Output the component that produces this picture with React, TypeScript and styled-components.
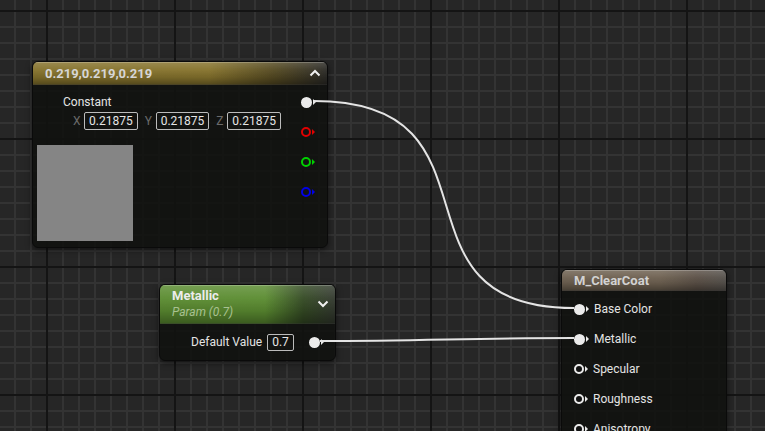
import React from "react";
import styled, { createGlobalStyle } from "styled-components";

const GlobalStyle = createGlobalStyle`
  html, body {
    margin: 0;
    padding: 0;
    background: #262626;
    overflow: hidden;
  }
  body {
    font-family: Roboto, "Liberation Sans", Arial, sans-serif;
    font-size: 12px;
  }
`;

const Canvas = styled.div`
  position: relative;
  width: 765px;
  height: 431px;
  overflow: hidden;
  background-color: #262626;
  background-image: linear-gradient(to right, #141414 2px, transparent 2px),
    linear-gradient(to bottom, #141414 2px, transparent 2px),
    linear-gradient(to right, #333333 2px, transparent 2px),
    linear-gradient(to bottom, #333333 2px, transparent 2px);
  background-size: 128px 128px, 128px 128px, 16px 16px, 16px 16px;
  background-position: 46px 10px;
`;

const Node = styled.div<{ $x: number; $y: number; $w: number; $h: number }>`
  position: absolute;
  left: ${(p) => p.$x}px;
  top: ${(p) => p.$y}px;
  width: ${(p) => p.$w}px;
  height: ${(p) => p.$h}px;
  box-sizing: border-box;
  display: flex;
  flex-direction: column;
  background: rgba(17, 18, 16, 0.9);
  border: 1px solid #0a0a0a;
  border-radius: 6px;
  box-shadow: 0 2px 6px rgba(0, 0, 0, 0.55);
  overflow: hidden;
  color: #e2e2e2;
`;

const Header = styled.div<{ $h: number; $tint: string; $mid: string; $end: string }>`
  position: relative;
  flex: none;
  height: ${(p) => p.$h}px;
  box-sizing: border-box;
  padding-left: 12px;
  display: flex;
  flex-direction: column;
  justify-content: center;
  background: linear-gradient(
      to bottom,
      rgba(255, 255, 255, 0.16) 0,
      rgba(255, 255, 255, 0.04) 35%,
      rgba(0, 0, 0, 0.12) 70%,
      rgba(0, 0, 0, 0.35) 100%
    ),
    linear-gradient(
      to right,
      ${(p) => p.$tint} 0%,
      ${(p) => p.$tint} 60%,
      ${(p) => p.$mid} 82%,
      ${(p) => p.$end} 100%
    );
  box-shadow: inset 0 1px 0 rgba(255, 255, 255, 0.22);
  border-bottom: 1px solid rgba(0, 0, 0, 0.5);
`;

const Title = styled.div<{ $color?: string }>`
  font-size: 13px;
  font-weight: 700;
  line-height: 17px;
  color: ${(p) => p.$color || "#d6d6d6"};
  white-space: nowrap;
`;

const SubTitle = styled.div`
  font-size: 12px;
  font-style: italic;
  line-height: 17px;
  color: #a8c191;
`;

const Chevron = styled.svg<{ $right: number }>`
  position: absolute;
  right: ${(p) => p.$right}px;
  top: 50%;
  transform: translateY(-50%);
`;

const Body = styled.div`
  flex: 1;
  display: flex;
`;

const LeftCol = styled.div`
  flex: 1;
  display: flex;
  flex-direction: column;
  padding-top: 9px;
`;

const Label = styled.div<{ $indent?: number }>`
  line-height: 16px;
  margin-left: ${(p) => p.$indent || 0}px;
  color: #e4e4e4;
  white-space: nowrap;
`;

const VecRow = styled.div`
  display: flex;
  align-items: center;
  gap: 7px;
  margin: 2px 0 0 40px;
`;

const Field = styled.div`
  display: flex;
  align-items: center;
  gap: 3px;
`;

const Axis = styled.span`
  color: #6b6b6b;
  width: 8px;
`;

const ValueBox = styled.div`
  height: 18px;
  box-sizing: border-box;
  padding: 0 4px;
  border: 1px solid #bcbcbc;
  border-radius: 2px;
  line-height: 16px;
  color: #e6e6e6;
`;

const Preview = styled.div`
  width: 96px;
  height: 96px;
  margin: 15px 0 0 4px;
  background: #858585;
`;

const PinCol = styled.div`
  display: flex;
  flex-direction: column;
  padding: 2px 11px 0 0;
`;

const PinRow = styled.div`
  height: 30px;
  display: flex;
  align-items: center;
  gap: 5px;
`;

const PinWrap = styled.span`
  display: inline-flex;
  align-items: center;
  flex: none;
`;

const PinDot = styled.span<{ $color: string; $filled: boolean }>`
  width: ${(p) => (p.$filled ? 11 : 10)}px;
  height: ${(p) => (p.$filled ? 11 : 10)}px;
  box-sizing: border-box;
  border-radius: 50%;
  border: 2px solid ${(p) => p.$color};
  background: ${(p) => (p.$filled ? p.$color : "#121212")};
`;

const PinArrow = styled.span<{ $color: string }>`
  width: 0;
  height: 0;
  margin-left: 1px;
  border-left: 3px solid ${(p) => p.$color};
  border-top: 3px solid transparent;
  border-bottom: 3px solid transparent;
`;

const ParamBody = styled.div`
  flex: 1;
  display: flex;
  align-items: center;
  padding: 0 11px 0 31px;
`;

const SmallBox = styled(ValueBox)`
  height: 17px;
  line-height: 15px;
  margin-left: 5px;
`;

const Spacer = styled.div`
  flex: 1;
`;

const InputList = styled.div`
  display: flex;
  flex-direction: column;
  padding: 3px 0 0 12px;
`;

const Wires = styled.svg`
  position: absolute;
  left: 0;
  top: 0;
  pointer-events: none;
`;

const Pin = ({ color = "#ebebeb", filled = false }: { color?: string; filled?: boolean }) => (
  <PinWrap>
    <PinDot $color={color} $filled={filled} />
    <PinArrow $color={color} />
  </PinWrap>
);

const ChevronIcon = ({ up, right }: { up?: boolean; right: number }) => (
  <Chevron $right={right} width="12" height="8" viewBox="0 0 12 8">
    <polyline
      points={up ? "1.5,6.5 6,2 10.5,6.5" : "1.5,1.5 6,6 10.5,1.5"}
      fill="none"
      stroke="#f0f0f0"
      strokeWidth="2"
    />
  </Chevron>
);

const clearCoatInputs = [
  { name: "Base Color", linked: true },
  { name: "Metallic", linked: true },
  { name: "Specular", linked: false },
  { name: "Roughness", linked: false },
  { name: "Anisotropy", linked: false },
];

export default function App() {
  return (
    <>
      <GlobalStyle />
      <Canvas>
        <Node $x={32} $y={61} $w={296} $h={187}>
          <Header $h={23} $tint="#86732d" $mid="#554a22" $end="#2c2b27">
            <Title>0.219,0.219,0.219</Title>
            <ChevronIcon up right={6} />
          </Header>
          <Body>
            <LeftCol>
              <Label $indent={30}>Constant</Label>
              <VecRow>
                <Field>
                  <Axis>X</Axis>
                  <ValueBox>0.21875</ValueBox>
                </Field>
                <Field>
                  <Axis>Y</Axis>
                  <ValueBox>0.21875</ValueBox>
                </Field>
                <Field>
                  <Axis>Z</Axis>
                  <ValueBox>0.21875</ValueBox>
                </Field>
              </VecRow>
              <Preview />
            </LeftCol>
            <PinCol>
              <PinRow>
                <Pin filled />
              </PinRow>
              <PinRow>
                <Pin color="#e00000" />
              </PinRow>
              <PinRow>
                <Pin color="#00d000" />
              </PinRow>
              <PinRow>
                <Pin color="#0000e6" />
              </PinRow>
            </PinCol>
          </Body>
        </Node>

        <Node $x={159} $y={284} $w={177} $h={77}>
          <Header $h={39} $tint="#5b8c31" $mid="#344a24" $end="#33392f">
            <Title $color="#ececec">Metallic</Title>
            <SubTitle>Param (0.7)</SubTitle>
            <ChevronIcon right={6} />
          </Header>
          <ParamBody>
            <Label>Default Value</Label>
            <SmallBox>0.7</SmallBox>
            <Spacer />
            <Pin filled />
          </ParamBody>
        </Node>

        <Node $x={561} $y={269} $w={166} $h={200}>
          <Header $h={21} $tint="#6f6252" $mid="#5c5147" $end="#57534e">
            <Title $color="#d2d2d2">M_ClearCoat</Title>
          </Header>
          <InputList>
            {clearCoatInputs.map((input) => (
              <PinRow key={input.name}>
                <Pin filled={input.linked} />
                <Label>{input.name}</Label>
              </PinRow>
            ))}
          </InputList>
        </Node>

        <Wires width="765" height="431" viewBox="0 0 765 431">
          <path
            d="M 314 101 C 514 101, 379 308, 574 308"
            fill="none"
            stroke="#e4e4e4"
            strokeWidth="2"
          />
          <path
            d="M 320 341 C 420 341, 474 338, 574 338"
            fill="none"
            stroke="#e4e4e4"
            strokeWidth="2"
          />
        </Wires>
      </Canvas>
    </>
  );
}
